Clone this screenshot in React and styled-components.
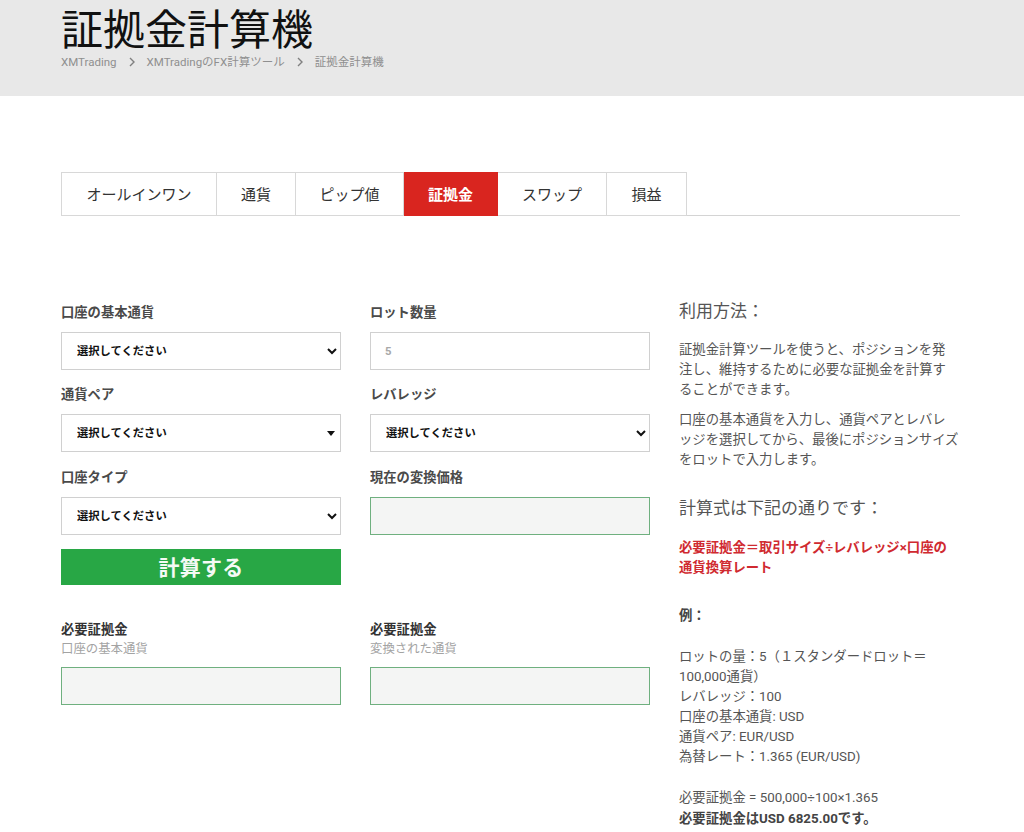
import React from "react";
import styled, { createGlobalStyle } from "styled-components";

const GlobalStyle = createGlobalStyle`
  * {
    box-sizing: border-box;
  }
  html,
  body {
    margin: 0;
    padding: 0;
    background: #ffffff;
  }
  body {
    font-family: Roboto, "Noto Sans CJK JP", sans-serif;
    color: #555555;
  }
`;

const Page = styled.div`
  width: 1024px;
  height: 832px;
  overflow: hidden;
`;

const Header = styled.header`
  height: 96px;
  background: #e8e8e8;
  padding: 7px 0 0 61px;

  h1 {
    margin: 0;
    font-weight: 400;
    font-size: 42px;
    line-height: 47px;
    color: #111111;
  }
`;

const Breadcrumb = styled.nav`
  display: flex;
  align-items: center;
  font-size: 11.5px;
  line-height: 16px;
  color: #8f8f8f;

  svg {
    margin: 0 12px;
  }
`;

const Main = styled.main`
  width: 899px;
  margin-left: 61px;
`;

const Tabs = styled.div`
  display: flex;
  height: 44px;
  margin-top: 76px;
  border-bottom: 1px solid #d4d4d4;
`;

const Tab = styled.div`
  display: flex;
  align-items: center;
  justify-content: center;
  width: ${(p) => p.$width}px;
  height: 44px;
  padding-bottom: 2px;
  border: 1px solid #d8d8d8;
  border-left-width: ${(p) => (p.$first ? 1 : 0)}px;
  background: ${(p) => (p.$active ? "#d9251f" : "#ffffff")};
  border-color: ${(p) => (p.$active ? "#d9251f" : "#d8d8d8")};
  color: ${(p) => (p.$active ? "#ffffff" : "#333333")};
  font-size: 15px;
  font-weight: ${(p) => (p.$active ? 700 : 400)};
`;

const Content = styled.div`
  display: grid;
  grid-template-columns: 589px 281px;
  column-gap: 29px;
  margin-top: 87px;
`;

const FormColumns = styled.div`
  display: grid;
  grid-template-columns: 280px 280px;
  column-gap: 29px;
  align-content: start;
`;

const FieldStack = styled.div`
  display: flex;
  flex-direction: column;
  gap: 15px;
`;

const Field = styled.div`
  display: flex;
  flex-direction: column;
  margin-top: ${(p) => p.$nudge || 0}px;
`;

const Label = styled.label`
  font-size: 13.3px;
  font-weight: 700;
  line-height: 20px;
  color: #4a4a4a;
  margin-bottom: 9px;
`;

const ResultLabel = styled(Label)`
  color: #333333;
  margin-bottom: 0;
`;

const SubLabel = styled.span`
  font-size: 12.4px;
  line-height: 18px;
  color: #a3a3a3;
  margin-bottom: 9px;
`;

const SelectBox = styled.div`
  position: relative;
  height: 38px;
`;

const Select = styled.select`
  width: 100%;
  height: 38px;
  padding: 0 6px 0 11px;
  border: 1px solid #d0d0d0;
  border-radius: 0;
  background: #ffffff;
  color: #111111;
  font-family: inherit;
  font-size: 11.3px;
  font-weight: 700;
  appearance: ${(p) => (p.$caret ? "none" : "auto")};
  padding-left: ${(p) => (p.$caret ? "15px" : "11px")};
`;

const Caret = styled.svg`
  position: absolute;
  right: 6px;
  top: 17px;
`;

const TextInput = styled.input`
  width: 100%;
  height: 38px;
  padding: 0 14px;
  border: 1px solid #d0d0d0;
  background: #ffffff;
  font-family: inherit;
  font-size: 11.3px;
  font-weight: 700;

  &::placeholder {
    color: #a8a8a8;
    opacity: 1;
  }
`;

const OutputBox = styled.div`
  height: 38px;
  border: 1px solid #6fb07f;
  background: #f4f5f4;
`;

const CalcButton = styled.button`
  display: block;
  width: 280px;
  height: 36px;
  margin-top: -1px;
  padding: 0 0 2px;
  border: 0;
  background: #28a745;
  color: #f4faf5;
  font-family: inherit;
  font-size: 21px;
  font-weight: 700;
  letter-spacing: 0.3px;
`;

const Results = styled.div`
  grid-column: 1 / 3;
  display: grid;
  grid-template-columns: 280px 280px;
  column-gap: 29px;
  margin-top: 35px;
`;

const Aside = styled.aside`
  font-size: 13.35px;
  line-height: 20.1px;
  color: #555555;
  margin-top: -4px;
`;

const AsideHeading = styled.h3`
  margin: ${(p) => p.$top}px 0 ${(p) => p.$bottom}px;
  font-size: 17px;
  font-weight: 400;
  line-height: 24px;
  color: #555555;
`;

const Paragraph = styled.p`
  margin: 0 0 ${(p) => p.$bottom || 0}px;
  font-weight: ${(p) => (p.$bold ? 700 : 400)};
  color: ${(p) => (p.$red ? "#d02a30" : p.$bold ? "#444444" : "#555555")};
`;

const tabs = [
  { label: "オールインワン", width: 156 },
  { label: "通貨", width: 79 },
  { label: "ピップ値", width: 108 },
  { label: "証拠金", width: 94, active: true },
  { label: "スワップ", width: 109 },
  { label: "損益", width: 80 },
];

const Chevron = () => (
  <svg width="6" height="10" viewBox="0 0 6 10" fill="none">
    <path d="M1 1l4 4-4 4" stroke="#808080" strokeWidth="1.4" />
  </svg>
);

const PickField = ({ label, caret, nudge }) => (
  <Field $nudge={nudge}>
    <Label>{label}</Label>
    <SelectBox>
      <Select $caret={caret} defaultValue="">
        <option value="">選択してください</option>
      </Select>
      {caret && (
        <Caret width="8" height="5" viewBox="0 0 8 5">
          <path d="M0 0h8L4 5z" fill="#111111" />
        </Caret>
      )}
    </SelectBox>
  </Field>
);

const App = () => {
  return (
    <Page>
      <GlobalStyle />
      <Header>
        <h1>証拠金計算機</h1>
        <Breadcrumb>
          <span>XMTrading</span>
          <Chevron />
          <span>XMTradingのFX計算ツール</span>
          <Chevron />
          <span>証拠金計算機</span>
        </Breadcrumb>
      </Header>
      <Main>
        <Tabs>
          {tabs.map((t, i) => (
            <Tab key={t.label} $width={t.width} $active={t.active} $first={i === 0}>
              {t.label}
            </Tab>
          ))}
        </Tabs>
        <Content>
          <FormColumns>
            <FieldStack>
              <PickField label="口座の基本通貨" />
              <PickField label="通貨ペア" caret />
              <PickField label="口座タイプ" nudge={1} />
              <CalcButton type="button">計算する</CalcButton>
            </FieldStack>
            <FieldStack>
              <Field>
                <Label>ロット数量</Label>
                <TextInput placeholder="5" />
              </Field>
              <PickField label="レバレッジ" />
              <Field $nudge={1}>
                <Label>現在の変換価格</Label>
                <OutputBox />
              </Field>
            </FieldStack>
            <Results>
              <Field>
                <ResultLabel>必要証拠金</ResultLabel>
                <SubLabel>口座の基本通貨</SubLabel>
                <OutputBox />
              </Field>
              <Field>
                <ResultLabel>必要証拠金</ResultLabel>
                <SubLabel>変換された通貨</SubLabel>
                <OutputBox />
              </Field>
            </Results>
          </FormColumns>
          <Aside>
            <AsideHeading $top={0} $bottom={17}>利用方法：</AsideHeading>
            <Paragraph $bottom={10}>
              証拠金計算ツールを使うと、ポジションを発
              <br />
              注し、維持するために必要な証拠金を計算す
              <br />
              ることができます。
            </Paragraph>
            <Paragraph>
              口座の基本通貨を入力し、通貨ペアとレバレ
              <br />
              ッジを選択してから、最後にポジションサイズ
              <br />
              をロットで入力します。
            </Paragraph>
            <AsideHeading $top={25} $bottom={18}>計算式は下記の通りです：</AsideHeading>
            <Paragraph $bold $red $bottom={28}>
              必要証拠金＝取引サイズ÷レバレッジ×口座の
              <br />
              通貨換算レート
            </Paragraph>
            <Paragraph $bold $bottom={21}>例：</Paragraph>
            <Paragraph $bottom={21}>
              ロットの量：5（１スタンダードロット＝
              <br />
              100,000通貨）
              <br />
              レバレッジ：100
              <br />
              口座の基本通貨: USD
              <br />
              通貨ペア: EUR/USD
              <br />
              為替レート：1.365 (EUR/USD)
            </Paragraph>
            <Paragraph>必要証拠金 = 500,000÷100×1.365</Paragraph>
            <Paragraph $bold>必要証拠金はUSD 6825.00です。</Paragraph>
          </Aside>
        </Content>
      </Main>
    </Page>
  );
};

export default App;
